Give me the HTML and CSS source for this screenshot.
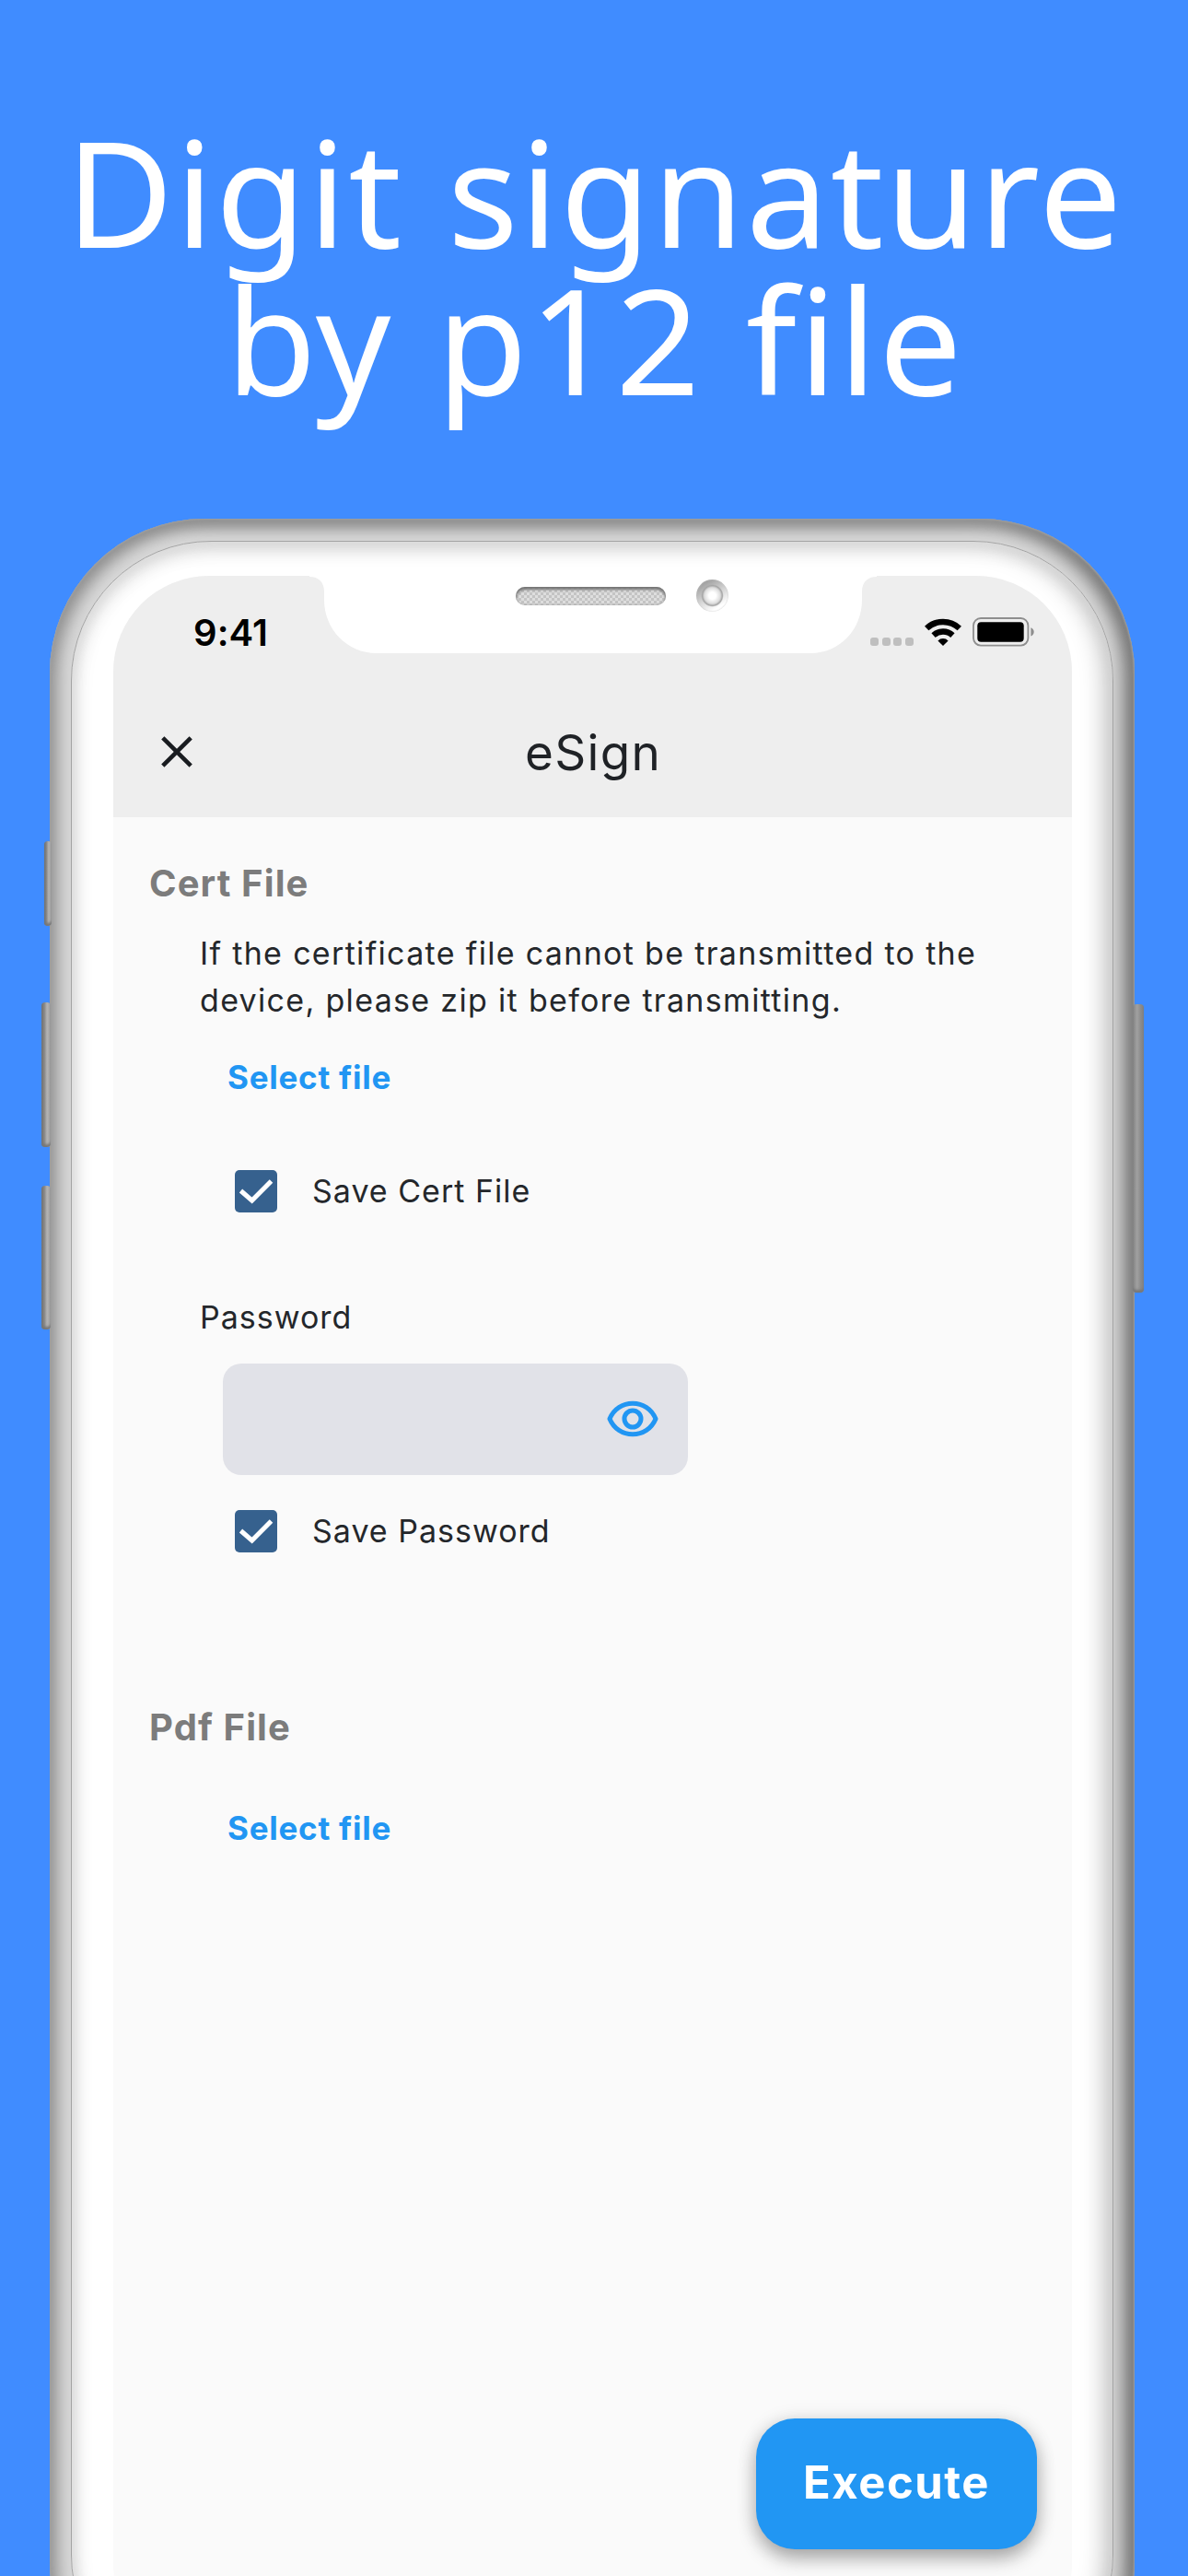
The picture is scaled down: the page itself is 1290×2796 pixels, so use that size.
FILE: index.html
```html
<!DOCTYPE html>
<html lang="en">
<head>
    <meta charset="UTF-8">
    <meta name="viewport" content="width=device-width, initial-scale=1.0">
    <title>eSign</title>
    <link rel="stylesheet" href="styles.css">
</head>
<body>
<div class="page">
    <h1 class="headline">Digit signature<br>by p12 file</h1>

    <div class="phone">
        <span class="side-button mute"></span>
        <span class="side-button volume-up"></span>
        <span class="side-button volume-down"></span>
        <span class="side-button power"></span>

        <div class="bezel">
            <div class="screen">
                <div class="notch">
                    <svg class="notch-shape" viewBox="0 0 616 84">
                        <path d="M0 0H616V1C606 1 600 7 600 17V26C600 58 576 84 544 84H73C41 84 16 58 16 26V17C16 7 10 1 0 1Z" fill="#fff"/>
                    </svg>
                    <span class="speaker"></span>
                    <span class="camera"></span>
                </div>

                <header class="top-bar">
                    <div class="status-bar">
                        <span class="time">9:41</span>
                        <div class="status-icons">
                            <div class="signal"><i></i><i></i><i></i><i></i></div>
                            <svg class="wifi" viewBox="0 0 40 30">
                                <g fill="none" stroke="#000" stroke-width="6.4">
                                    <path d="M2.2 11A26 26 0 0 1 37.8 11"/>
                                    <path d="M9.6 18.6A15.2 15.2 0 0 1 30.4 18.6"/>
                                </g>
                                <path d="M20 30L14.4 24.4A8 8 0 0 1 25.6 24.4Z"/>
                            </svg>
                            <svg class="battery" viewBox="0 0 68 32">
                                <rect x="1" y="1" width="59.4" height="29.6" rx="8" fill="none" stroke="#8e8e8e" stroke-width="1.8"/>
                                <rect x="5.3" y="5.2" width="50.4" height="21.6" rx="4" fill="#000"/>
                                <path d="M63.4 11.2C67.8 12.8 67.8 18.8 63.4 20.4Z" fill="#8e8e8e"/>
                            </svg>
                        </div>
                    </div>
                    <div class="title-bar">
                        <svg class="close" viewBox="0 0 34 34">
                            <path d="M1.8 1.8L32.2 32.2M32.2 1.8L1.8 32.2" stroke="#191c20" stroke-width="4.6"/>
                        </svg>
                        <span class="title">eSign</span>
                    </div>
                </header>

                <main class="content">
                    <h2 class="section-title">Cert File</h2>
                    <p class="hint">If the certificate file cannot be transmitted to the<br>device, please zip it before transmitting.</p>
                    <a class="select-file cert-select">Select file</a>
                    <div class="check-row save-cert">
                        <svg class="checkbox" viewBox="0 0 46 46">
                            <rect width="46" height="46" rx="5" fill="#36618e"/>
                            <path d="M6.5 22.5L18.6 33L39.5 12" fill="none" stroke="#fff" stroke-width="5"/>
                        </svg>
                        <span>Save Cert File</span>
                    </div>
                    <label class="label">Password</label>
                    <div class="password-field">
                        <svg class="eye" viewBox="0 0 24 24">
                            <g fill="none" stroke="#2196f3" stroke-width="2" stroke-linejoin="round">
                                <path d="M2 12C3.8 7.7 7.6 5.3 12 5.3S20.2 7.7 22 12C20.2 16.3 16.4 18.7 12 18.7S3.8 16.3 2 12Z"/>
                                <circle cx="12" cy="12" r="3.6"/>
                            </g>
                        </svg>
                    </div>
                    <div class="check-row save-password">
                        <svg class="checkbox" viewBox="0 0 46 46">
                            <rect width="46" height="46" rx="5" fill="#36618e"/>
                            <path d="M6.5 22.5L18.6 33L39.5 12" fill="none" stroke="#fff" stroke-width="5"/>
                        </svg>
                        <span>Save Password</span>
                    </div>
                    <h2 class="section-title pdf-title">Pdf File</h2>
                    <a class="select-file pdf-select">Select file</a>
                </main>

                <button class="execute">Execute</button>
            </div>
        </div>
    </div>
</div>
</body>
</html>
```
FILE: styles.css
```css
* {
    box-sizing: border-box;
}

body {
    margin: 0;
    background-color: #408cff;
    font-family: 'Inter', 'Liberation Sans', sans-serif;
}

/* The phone is taller than the page, cut it off at the bottom */
.page {
    width: 1290px;
    height: 2796px;
    overflow: hidden;
}

.headline {
    margin: 0;
    padding: 127px 0 0 2px;
    height: 563px;
    font-family: 'Noto Sans', sans-serif;
    font-size: 160px;
    font-weight: 400;
    line-height: 160px;
    letter-spacing: 2.2px;
    word-spacing: 4px;
    text-align: center;
    white-space: nowrap;
    color: #fff;
}

/* Phone body */
.phone {
    position: relative;
    width: 1178px;
    height: 2386px;
    margin-left: 54px;
    padding: 24px 23px;
    border-radius: 168px;
    background-color: #d8d8d8;
    box-shadow:
        inset 0 0 2px 1px #a0a0a0,
        inset 8px 6px 18px #909090,
        inset -11px 4px 20px #6c6c6c;
}

.side-button {
    position: absolute;
    width: 10px;
    border-radius: 4px;
    background: linear-gradient(to right, #6f6f6f, #8c8c8c 35%, #b2b2b2 60%, #ababab);
    box-shadow: inset 0 -3px 3px #777;
}
.mute { left: -6px; top: 350px; width: 8px; height: 92px; }
.volume-up { left: -9px; top: 525px; height: 157px; }
.volume-down { left: -9px; top: 724px; height: 156px; }
.power {
    left: 1176px;
    top: 527px;
    width: 12px;
    height: 313px;
    background: linear-gradient(to right, #888, #a0a0a0 40%, #8a8a8a 75%, #858585);
}

.bezel {
    height: 2338px;
    padding: 37px 44px 37px 45px;
    border: 1px solid #a3a3a3;
    border-radius: 152px;
    background-color: #fff;
    box-shadow:
        inset 3px 3px 10px #dedede,
        inset -8px 0 26px #bdbdbd,
        inset 6px 8px 20px #ececec;
}

/* Screen */
.screen {
    position: relative;
    height: 2262px;
    border-radius: 104px;
    background-color: #fafafa;
}

.notch {
    position: absolute;
    left: 213px;
    top: 0;
    width: 616px;
    height: 84px;
}
.notch-shape {
    display: block;
    width: 616px;
    height: 84px;
}
.speaker {
    position: absolute;
    left: 224px;
    top: 12px;
    width: 163px;
    height: 20px;
    border-radius: 10px;
    background: repeating-conic-gradient(#c4c4c4 0 25%, #dedede 0 50%) 0 0 / 6px 6px;
    box-shadow: inset 0 3px 3px #757575, inset 0 0 3px #999;
}
.camera {
    position: absolute;
    left: 420px;
    top: 4px;
    width: 35px;
    height: 35px;
    border-radius: 50%;
    background:
        radial-gradient(closest-side, #fff 22%, #dcdcdc 50%, #a4a4a4 62%, transparent 70%),
        linear-gradient(150deg, #8a8a8a, #d5d5d5 50%, #fff 80%);
    box-shadow: inset 0 0 2px #c0c0c0;
}

.top-bar {
    height: 262px;
    padding-top: 41px;
    border-radius: 104px 104px 0 0;
    background-color: #eee;
}

.status-bar {
    display: flex;
    justify-content: space-between;
    align-items: center;
    height: 40px;
    padding: 0 40px 0 87px;
}
.time {
    padding-top: 1px;
    font-size: 40px;
    line-height: 40px;
    font-weight: 600;
    letter-spacing: 0.1px;
    color: #000;
}
.status-icons {
    display: flex;
    align-items: center;
    height: 32px;
}
.signal {
    display: flex;
    gap: 3.6px;
    margin: 20px 12px 0 0;
}
.signal i {
    width: 9px;
    height: 9px;
    border-radius: 3px;
    background-color: #bfbfbf;
}
.wifi {
    width: 40px;
    height: 30px;
    margin-right: 12px;
}
.battery {
    width: 68px;
    height: 32px;
}

.title-bar {
    display: flex;
    align-items: center;
    height: 64px;
    margin-top: 78px;
    padding-left: 52px;
}
.close {
    width: 34px;
    height: 34px;
}
.title {
    margin-left: 361px;
    padding-top: 2px;
    font-size: 53px;
    line-height: 64px;
    letter-spacing: 1.3px;
    color: #1f2226;
}

/* Form */
.content {
    display: flex;
    flex-direction: column;
    align-items: flex-start;
    padding: 47px 0 0 39px;
    font-size: 34px;
    letter-spacing: 1px;
    color: #24272b;
}

.section-title {
    margin: 0;
    font-size: 40px;
    font-weight: 700;
    line-height: 50px;
    letter-spacing: 1.1px;
    color: #7c7c7c;
}

.hint {
    margin: 25px 0 0 55px;
    line-height: 51px;
    letter-spacing: 1.32px;
    white-space: nowrap;
}

.select-file {
    margin-left: 85px;
    font-size: 35px;
    font-weight: 700;
    line-height: 50px;
    letter-spacing: 0.75px;
    color: #2196f3;
}
.cert-select { margin-top: 33px; }
.pdf-select { margin-top: 59px; }

.check-row {
    display: flex;
    align-items: center;
    gap: 38px;
    height: 46px;
    margin-left: 93px;
    line-height: 46px;
}
.save-cert { margin-top: 76px; }
.save-password { margin-top: 38px; }
.checkbox {
    width: 46px;
    height: 46px;
}

.label {
    margin: 89px 0 0 55px;
    line-height: 50px;
}

.password-field {
    display: flex;
    align-items: center;
    justify-content: flex-end;
    width: 505px;
    height: 121px;
    margin: 25px 0 0 80px;
    padding: 0 30px 1px 0;
    border-radius: 20px;
    background-color: #e1e2e8;
}
.eye {
    width: 60px;
    height: 60px;
}

.pdf-title { margin-top: 165px; }

.execute {
    position: absolute;
    left: 698px;
    top: 2000px;
    width: 305px;
    height: 142px;
    padding: 0 0 3px;
    border: none;
    border-radius: 42px;
    background-color: #2196f3;
    box-shadow: 0 10px 20px rgba(0, 0, 0, 0.3), 0 2px 22px rgba(0, 0, 0, 0.1);
    color: #fff;
    font-family: inherit;
    font-size: 49px;
    font-weight: 700;
    letter-spacing: 1.5px;
}
```
